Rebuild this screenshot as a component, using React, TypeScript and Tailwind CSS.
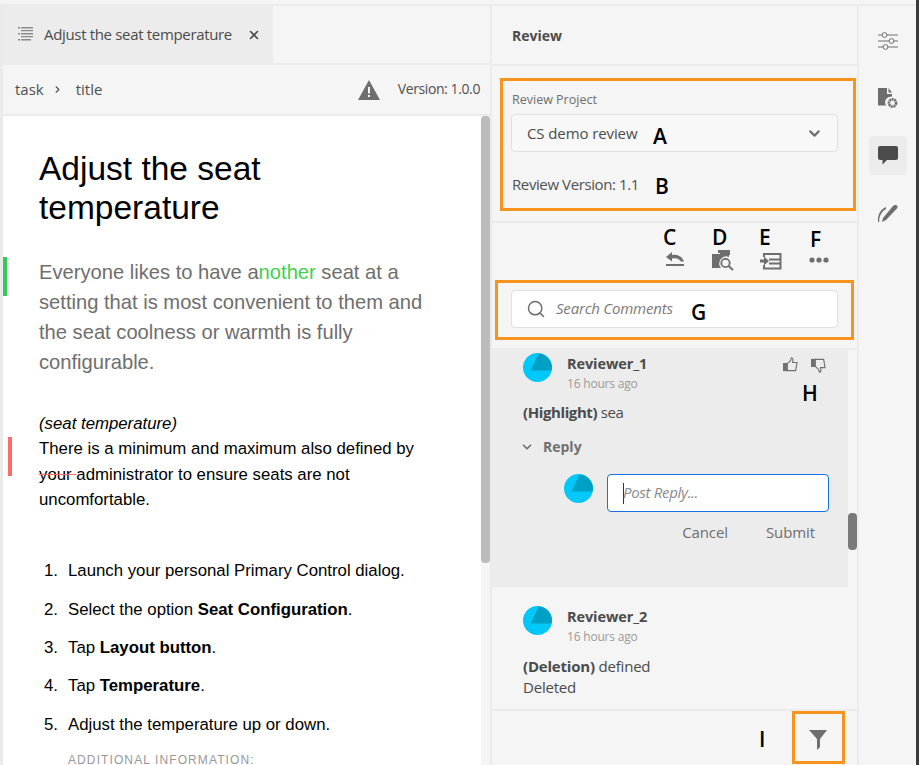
import { ChevronDown, ChevronRight, Search, X } from 'lucide-react';

const ui = 'font-["Open_Sans",sans-serif]';
const arial = 'font-["Liberation_Sans",Arial,sans-serif]';

function Avatar() {
  return (
    <svg viewBox="0 0 30 30" className="h-[29px] w-[29px] shrink-0">
      <circle cx="15" cy="15" r="15" fill="#00c8f8" />
      <path d="M16 0.6 A14.5 14.5 0 0 1 29.6 18 L8 18 Z" fill="#00a0c4" />
    </svg>
  );
}

function Tag({ children }: { children: string }) {
  return <span className="absolute text-[21px] leading-none font-semibold text-black">{children}</span>;
}

function ToolbarIcons() {
  return (
    <div className="flex h-[67px] items-end pb-[19px] text-[#6e6e6e]">
      <svg viewBox="0 0 20 16" className="mb-[4px] ml-[154px] h-[16px] w-[20px]" fill="currentColor">
        <path d="M1 6 L7 1 V4 C12 3 17 5 19 10.5 H16 C14 7.5 11 6.5 7 7.5 V10.5 Z" />
        <rect x="1" y="13" width="18" height="2" />
      </svg>
      <svg viewBox="0 0 22 21" className="ml-[27px] h-[21px] w-[22px]" fill="currentColor">
        <path d="M6 0 H18 V5 H8 V3 H6 Z" />
        <path d="M0 4 H17 V7 A7 7 0 0 0 9 18 H0 Z" />
        <circle cx="13.5" cy="13" r="4.2" fill="none" stroke="currentColor" strokeWidth="1.8" />
        <path d="M16.5 16 L21 20" stroke="currentColor" strokeWidth="2" />
      </svg>
      <svg viewBox="0 0 22 18" className="mb-[1px] ml-[26px] h-[18px] w-[22px]" fill="currentColor">
        <path d="M3 1 H21.5 V17.5 H3 V13 H5 V15.5 H19.5 V3 H5 V5 H3 Z" />
        <path d="M9 6.5 H20 V8.5 H9 Z M9 10.5 H20 V12.5 H9 Z" />
        <path d="M0 7.5 H4 V4.5 L9 9 L4 13.5 V10.5 H0 Z" />
      </svg>
      <svg viewBox="0 0 20 6" className="mb-[8px] ml-[27px] h-[6px] w-[20px]" fill="currentColor">
        <circle cx="3" cy="3" r="2.6" />
        <circle cx="10" cy="3" r="2.6" />
        <circle cx="17" cy="3" r="2.6" />
      </svg>
    </div>
  );
}

function Rail() {
  return (
    <div className="flex w-[57px] shrink-0 flex-col items-center bg-[#f5f5f5] pt-[26px] text-[#6e6e6e]">
      <svg viewBox="0 0 20 18" className="h-[18px] w-[20px]" fill="none" stroke="currentColor" strokeWidth="1">
        <path d="M0 3 H4 M9 3 H20 M0 9 H11 M16 9 H20 M0 15 H5 M10 15 H20" />
        <circle cx="6.5" cy="3" r="2.4" />
        <circle cx="13.5" cy="9" r="2.4" />
        <circle cx="7.5" cy="15" r="2.4" />
      </svg>
      <svg viewBox="0 0 20 21" className="mt-[38px] h-[21px] w-[20px]" fill="currentColor">
        <path d="M0 0 H9 V6 H14 V8.5 A6 6 0 0 0 8 17.5 H0 Z" />
        <path d="M10.5 0 L14 4.5 H10.5 Z" />
        <circle cx="14.5" cy="15" r="3.6" fill="none" stroke="currentColor" strokeWidth="2.6" strokeDasharray="2 0.6" />
      </svg>
      <div className="mt-[27px] flex h-[39px] w-[38px] items-center justify-center rounded-[4px] bg-[#ececec]">
        <svg viewBox="0 0 20 19" className="h-[19px] w-[20px]" fill="#4b4b4b">
          <path d="M2 0 H18 A2 2 0 0 1 20 2 V12 A2 2 0 0 1 18 14 H9 L4.5 18.5 V14 H2 A2 2 0 0 1 0 12 V2 A2 2 0 0 1 2 0 Z" />
        </svg>
      </div>
      <svg viewBox="0 0 21 19" className="mt-[29px] h-[19px] w-[21px]" fill="currentColor">
        <path d="M6 14 L16 2 C17 1 19 0.5 20 1.5 C21 2.5 20.5 4 19.5 5 L9 16 L5 18 Z" />
        <path d="M9 3 C4 5 0.5 10 1 18 L2.2 18 C2 12 4.5 7.5 9 5 Z" />
      </svg>
    </div>
  );
}

export default function App() {
  return (
    <div className={`relative flex h-[765px] w-[919px] overflow-hidden bg-[#ebebeb] ${ui}`}>
      <div className="flex min-w-0 flex-1 flex-col">
        <div className="h-[4px] shrink-0 bg-[#f5f5f5]" />
        <div className="flex min-h-0 flex-1 pt-[2px]">
          {/* document side */}
          <div className="ml-[3px] flex w-[487px] shrink-0 flex-col">
            <div className="flex h-[57px] shrink-0 bg-[#f5f5f5]">
              <div className="flex w-[270px] items-center bg-[#ececec] pl-[15px]">
                <svg viewBox="0 0 16 15" className="h-[15px] w-[16px] text-[#8a8a8a]" fill="currentColor">
                  <path d="M0 0 H2 V1.5 H0 Z M3 0 H15 V1.5 H3 Z M3 3 H15 V4.2 H3 Z M0 6 H2 V7.5 H0 Z M3 6 H15 V7.5 H3 Z M3 9 H15 V10.2 H3 Z M0 12 H2 V13.5 H0 Z M3 12 H13 V13.5 H3 Z" />
                </svg>
                <span className="ml-[10px] text-[15px] tracking-[-0.33px] text-[#4b4b4b]">Adjust the seat temperature</span>
                <X size={14} strokeWidth={2.8} className="ml-[15px] text-[#4b4b4b]" />
              </div>
            </div>
            <div className="mt-[2px] flex h-[49px] shrink-0 items-center bg-[#f5f5f5] pl-[12px] text-[15px] text-[#505050]">
              <span>task</span>
              <ChevronRight size={11} strokeWidth={2.4} className="ml-[8px]" />
              <span className="ml-[13px]">title</span>
              <svg viewBox="0 0 22 20" className="ml-auto h-[20px] w-[22px] text-[#6e6e6e]" fill="currentColor">
                <path fillRule="evenodd" d="M11 0 L22 20 H0 Z M10 7 V13.5 H12 V7 Z M10 15 V17 H12 V15 Z" />
              </svg>
              <span className="mr-[10px] mb-[3px] ml-[18px] text-[14px] tracking-[-0.4px]">Version: 1.0.0</span>
            </div>
            <div className="mt-[2px] flex min-h-0 flex-1 bg-white">
              <div className={`relative min-w-0 flex-1 pt-[33px] pl-[36px] text-black ${arial}`}>
                <div className="absolute top-[141px] left-0 h-[39px] w-[4px] bg-[#2ecc50]" />
                <div className="absolute top-[321px] left-[5px] h-[39px] w-[4px] bg-[#ff6b6b]" />
                <h1 className="w-[300px] text-[33.5px] leading-[39px]">Adjust the seat temperature</h1>
                <p className="mt-[30px] w-[400px] text-[20.16px] leading-[30px] text-[#6e6e6e]">
                  Everyone likes to have a<span className="text-[#3fd14f]">nother</span> seat at a setting that is most convenient to them and the seat coolness or warmth is fully configurable.
                </p>
                <p className="mt-[34px] text-[16.8px] leading-[25.33px]">
                  <i>(seat temperature)</i>
                  <br />
                  There is a minimum and maximum also defined by
                  <br />
                  <span className="line-through decoration-[#ff6b6b]">your </span>administrator to ensure seats are not
                  <br />
                  uncomfortable.
                </p>
                <ol className="mt-[46px] flex flex-col gap-[13.3px] pl-[5px] text-[16.8px] leading-[25px]">
                  {[
                    <>Launch your personal Primary Control dialog.</>,
                    <>Select the option <b>Seat Configuration</b>.</>,
                    <>Tap <b>Layout button</b>.</>,
                    <>Tap <b>Temperature</b>.</>,
                    <>Adjust the temperature up or down.</>,
                  ].map((item, i) => (
                    <li key={i} className="flex">
                      <span className="w-[24px] shrink-0">{i + 1}.</span>
                      <span>{item}</span>
                    </li>
                  ))}
                </ol>
                <div className="mt-[16px] ml-[29px] text-[12px] leading-[14px] tracking-[1.1px] text-[#999]">ADDITIONAL INFORMATION:</div>
              </div>
              <div className="w-[9px] shrink-0 bg-[#f5f5f5]">
                <div className="h-[447px] rounded-[4px] bg-[#bcbcbc]" />
              </div>
            </div>
          </div>

          {/* review panel */}
          <div className="ml-[2px] flex w-[365px] shrink-0 flex-col">
            <div className="flex h-[58px] shrink-0 items-center bg-[#f5f5f5] pl-[20px] text-[14px] font-bold text-[#4b4b4b]">Review</div>
            <div className="mt-[2px] h-[155px] shrink-0 bg-[#f5f5f5] px-[19px] pt-[26px]">
              <div className="ml-px text-[12.5px] leading-[16px] text-[#6e6e6e]">Review Project</div>
              <div className="mt-[6px] flex h-[38px] items-center rounded-[4px] border border-[#e1e1e1] bg-[#f8f8f8] pr-[14px] pl-[15px] text-[15px] tracking-[-0.1px] text-[#4b4b4b]">
                CS demo review
                <ChevronDown size={17} strokeWidth={3} className="ml-auto text-[#6e6e6e]" />
              </div>
              <div className="mt-[22px] ml-px text-[15px] leading-[20px] tracking-[-0.4px] text-[#505050]">Review Version: 1.1</div>
            </div>
            <div className="mt-[2px] h-[125px] shrink-0 bg-[#f5f5f5] px-[19px]">
              <ToolbarIcons />
              <div className="flex h-[38px] items-center rounded-[4px] border border-[#e1e1e1] bg-white pl-[14px] text-[15px] tracking-[-0.2px] text-[#7a7a7a] italic">
                <Search size={20} strokeWidth={1.8} className="text-[#6e6e6e]" />
                <span className="mb-[2px] ml-[10px]">Search Comments</span>
              </div>
            </div>
            <div className="mt-[2px] flex min-h-0 flex-1 bg-[#f5f5f5]">
              <div className="min-w-0 flex-1">
                <div className="h-[237px] bg-[#ececec] pt-[3px] pl-[31px]">
                  <div className="flex">
                    <Avatar />
                    <div className="ml-[15px] pt-[2px]">
                      <div className="text-[14.5px] leading-[18px] font-bold tracking-[-0.1px] text-[#4b4b4b]">Reviewer_1</div>
                      <div className="mt-[2px] text-[12px] leading-[18px] tracking-[-0.2px] text-[#9a9a9a]">16 hours ago</div>
                    </div>
                    <svg viewBox="0 0 16 16" className="mt-[4px] ml-auto h-[15px] w-[15px] text-[#707070]" fill="none" stroke="currentColor" strokeWidth="1.2">
                      <path d="M4.5 7 L8 4 L9 0.8 C10.5 0.8 11 2.5 10.2 5.8 H15 L13.5 14.5 H4.5 Z" />
                      <rect x="0.6" y="7" width="3.6" height="7.5" fill="currentColor" />
                    </svg>
                    <svg viewBox="0 0 16 16" className="mt-[5px] mr-[22px] ml-[13px] h-[15px] w-[15px] text-[#707070]" fill="none" stroke="currentColor" strokeWidth="1.2">
                      <path d="M4.5 9 L8 12 L9 15.2 C10.5 15.2 11 13.5 10.2 10.2 H15 L13.5 1.5 H4.5 Z" />
                      <rect x="0.6" y="1.5" width="3.6" height="7.5" fill="currentColor" />
                    </svg>
                  </div>
                  <div className="mt-[9px] text-[15px] leading-[20px] tracking-[-0.4px] text-[#4b4b4b]">
                    <b>(Highlight)</b> sea
                  </div>
                  <div className="mt-[15px] -ml-[3px] flex items-center text-[14px] leading-[20px] font-bold text-[#707070]">
                    <ChevronDown size={14} strokeWidth={3} />
                    <span className="ml-[9px]">Reply</span>
                  </div>
                  <div className="mt-[17px] ml-[41px] flex items-start">
                    <Avatar />
                    <div className="ml-[14px] flex h-[38px] w-[222px] items-center rounded-[4px] border border-[#1473e6] bg-white pl-[15px] text-[15px] tracking-[-0.3px] text-[#8a8a8a] italic">
                      <span className="mr-[-1px] h-[21px] w-[1px] bg-[#333]" />
                      <span className="mb-[2px]">Post Reply...</span>
                    </div>
                  </div>
                  <div className="mt-[10px] flex justify-end pr-[33px] text-[15px] leading-[20px] tracking-[-0.1px] text-[#6e6e6e]">
                    <span>Cancel</span>
                    <span className="ml-[38px]">Submit</span>
                  </div>
                </div>
                <div className="pt-[19px] pl-[31px]">
                  <div className="flex">
                    <Avatar />
                    <div className="ml-[15px] pt-[2px]">
                      <div className="text-[14.5px] leading-[18px] font-bold tracking-[-0.1px] text-[#4b4b4b]">Reviewer_2</div>
                      <div className="mt-[2px] text-[12px] leading-[18px] tracking-[-0.2px] text-[#9a9a9a]">16 hours ago</div>
                    </div>
                  </div>
                  <div className="mt-[10px] text-[15px] leading-[21px] tracking-[-0.2px] text-[#4b4b4b]">
                    <b>(Deletion)</b> defined
                    <br />
                    Deleted
                  </div>
                </div>
              </div>
              <div className="relative w-[9px] shrink-0">
                <div className="absolute top-[163px] h-[37px] w-[9px] rounded-[4px] bg-[#7a7a7a]" />
              </div>
            </div>
            <div className="mt-[2px] flex h-[54px] shrink-0 items-center justify-end bg-[#f5f5f5] pt-[4px] pr-[30px]">
              <svg viewBox="0 0 18 20" className="h-[20px] w-[18px] text-[#6e6e6e]" fill="currentColor">
                <path d="M0 0 H18 L11 9 V17 L8 20 V9 Z" />
              </svg>
            </div>
          </div>

          <div className="ml-[2px] flex">
            <Rail />
          </div>
        </div>
      </div>
      <div className="w-[3px] shrink-0 bg-[#3a3a3a]" />

      {/* callouts drawn on top of the screenshot */}
      <div className="absolute top-[78px] left-[500px] h-[133px] w-[356px] border-[3px] border-[#f7941d]" />
      <div className="absolute top-[280px] left-[495px] h-[60px] w-[359px] border-[3px] border-[#f7941d]" />
      <div className="absolute top-[711px] left-[792px] h-[53px] w-[53px] border-[3px] border-[#f7941d]" />
      <div className="absolute top-[126px] left-[653px]"><Tag>A</Tag></div>
      <div className="absolute top-[176px] left-[655px]"><Tag>B</Tag></div>
      <div className="absolute top-[227px] left-[663px]"><Tag>C</Tag></div>
      <div className="absolute top-[227px] left-[712px]"><Tag>D</Tag></div>
      <div className="absolute top-[227px] left-[759px]"><Tag>E</Tag></div>
      <div className="absolute top-[229px] left-[810px]"><Tag>F</Tag></div>
      <div className="absolute top-[302px] left-[691px]"><Tag>G</Tag></div>
      <div className="absolute top-[383px] left-[802px]"><Tag>H</Tag></div>
      <div className="absolute top-[729px] left-[759px]"><Tag>I</Tag></div>
    </div>
  );
}
